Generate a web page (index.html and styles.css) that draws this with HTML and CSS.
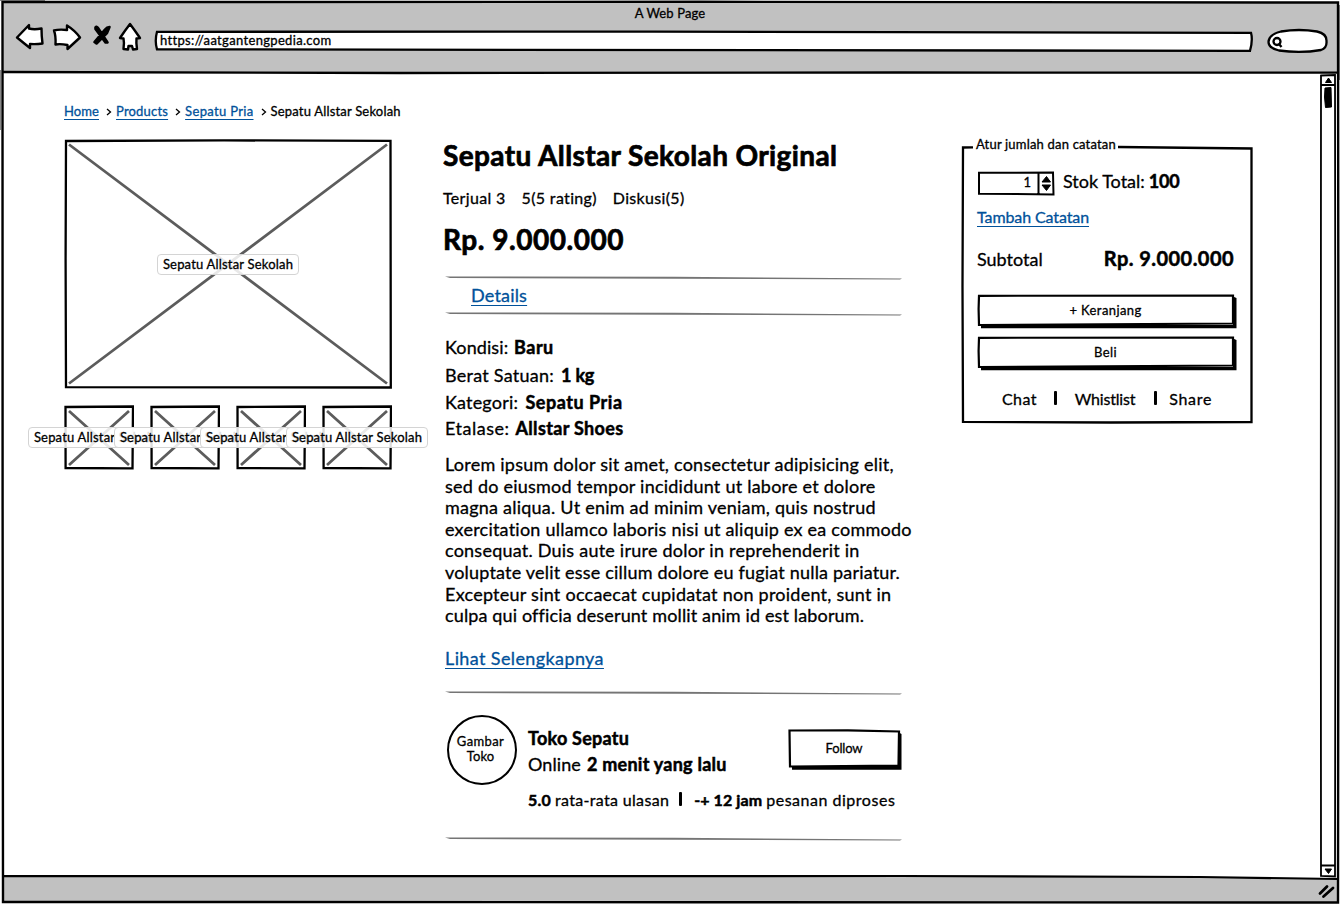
FILE: index.html
```html
<!DOCTYPE html>
<html lang="id">
<head>
<meta charset="utf-8">
<title>A Web Page</title>
<link rel="stylesheet" href="styles.css">
</head>
<body>
<div class="window">
  <svg class="frame" viewBox="0 0 1340 904" aria-hidden="true">
    <rect width="1340" height="904" fill="#fff"/>
    <path d="M3 2.5H1337V72.5H3z" fill="#c1c1c1"/>
    <path d="M3 876H1100L1338 878.5V902H3z" fill="#c1c1c1"/>
    <path d="M0 .5H45M.5 70V130M1339.500 5V80" stroke="#888" stroke-width="1" fill="none"/>
    <path d="M2.500 2L700 1.800 1338 2.500 1338.500 450 1338 902.500 700 902.200 3 902 2.600 500z" fill="none" stroke="#000" stroke-width="2.400"/>
    <path d="M3 72L400 73 900 72.500 1338 72.600" fill="none" stroke="#000" stroke-width="2.300"/>
    <path d="M3 876.200L900 876 1200 877 1338 879" fill="none" stroke="#000" stroke-width="2.200"/>
    <path d="M1321 75.500L1335 75 1335.500 500 1335 876.500 1321 876 1320.800 500z" fill="#fff" stroke="#000" stroke-width="1.800"/>
    <path d="M1321 85H1335M1321 865.500H1335" stroke="#000" stroke-width="1.800"/>
    <path d="M1328.500 78L1331.500 82.500H1325.500z" stroke="#000"/>
    <path d="M1325 869H1331.500L1328.500 873.500z" stroke="#000"/>
    <path d="M1325 88L1331 87.500 1331.500 107 1325.500 107.500 1324.500 97z" stroke="#000"/>
    <path d="M1320 893.500L1327 886.500M1323.500 896.500L1333 888" stroke="#000" stroke-width="2.800" stroke-linecap="round"/>
  </svg>

  <header class="chrome">
    <div class="chrome-title">A Web Page</div>
    <div class="toolbar">
      <svg class="nav-icons" width="130" height="32" viewBox="0 0 130 32" fill="#fff" stroke="#000" stroke-width="2.400" stroke-linejoin="round">
        <path d="M2 16.500L14 4V7.500Q19 9 26.500 7.500 26.500 15 27.500 22.500 21 23.500 15 23V27Q8 21.500 2 16.500z"/>
        <path d="M39 9.500Q44 8 52 9L52 4.500Q60 9.500 65 16.500L52.500 28V24Q45 22.500 40.500 23.500 41 15 39 9.500z"/>
        <path d="M80.500 6.500Q81 5 83 7L92.500 21.500 90.500 21.500 80.500 8zM94.500 6Q92 6 90 8.500L79.500 21 81.500 22.500 92 12z" fill="#000" stroke-width="2.600"/>
        <path d="M115 3Q119.500 9 125 17L121.500 17.500Q121 22 122 28L118 28.500 117 25H113.500L113 28.500 108.500 28Q109.500 22 108.500 17.500L105 17Q110 9.500 115 3z"/>
      </svg>
      <div class="address">
        <svg class="fill" viewBox="0 0 1100 22"><path d="M3 1.800L500 1.600 1097 2.800Q1099 10 1096 20.800L3 19.300Q.5 11 3 1.800z" fill="#fff" stroke="#000" stroke-width="2.300"/></svg>
        <span class="t13 ls33">https://aatgantengpedia.com</span>
      </div>
      <svg class="search" width="62" height="26" viewBox="0 0 62 26" fill="#fff" stroke="#000" stroke-width="2.300">
        <path d="M14 3.500Q32 .5 50 3.500Q60 5.500 59.500 13.500Q60 20 54 22Q34 25.500 12 22.500Q1.500 20 1.500 14Q2 6.500 14 3.500z"/>
        <circle cx="10" cy="13.500" r="3.500"/><path d="M11.500 15.500L14.500 19"/>
      </svg>
    </div>
  </header>

  <nav class="breadcrumb t13">
    <a class="ls09">Home</a><svg class="chev" viewBox="0 0 6 10"><path d="M1 2L4.500 5 1 8"/></svg>
    <a class="ls18">Products</a><svg class="chev" viewBox="0 0 6 10"><path d="M1 2L4.500 5 1 8"/></svg>
    <a class="ls33">Sepatu Pria</a><svg class="chev" viewBox="0 0 6 10"><path d="M1 2L4.500 5 1 8"/></svg>
    <span class="ls18">Sepatu Allstar Sekolah</span>
  </nav>

  <main class="product">
    <section class="gallery">
      <div class="photo photo-main">
        <svg class="fill" viewBox="0 0 328 250"><path d="M2 2L160 1.400 326.500 1.800 326.800 248.500 2 248.200 1.600 120z" fill="#fff" stroke="#000" stroke-width="2.300"/><path d="M5 5.500L323 244.500M323 5.500L5 244.500" stroke="#5c5c5c" stroke-width="2.800"/></svg>
        <span class="photo-label t13 ls18">Sepatu Allstar Sekolah</span>
      </div>
      <div class="thumbs">
        <div class="photo thumb"><svg class="fill" viewBox="0 0 70 65"><path d="M1.500 2L69 1.500 68.500 63.300 1.600 63z" fill="#fff" stroke="#000" stroke-width="2.300"/><path d="M5 6L65 60M65 6L5 60" stroke="#5c5c5c" stroke-width="2.800"/></svg><span class="photo-label t13 ls18">Sepatu Allstar Sekolah</span></div>
        <div class="photo thumb"><svg class="fill" viewBox="0 0 70 65"><path d="M1.500 2L69 1.500 68.500 63.300 1.600 63z" fill="#fff" stroke="#000" stroke-width="2.300"/><path d="M5 6L65 60M65 6L5 60" stroke="#5c5c5c" stroke-width="2.800"/></svg><span class="photo-label t13 ls18">Sepatu Allstar Sekolah</span></div>
        <div class="photo thumb"><svg class="fill" viewBox="0 0 70 65"><path d="M1.500 2L69 1.500 68.500 63.300 1.600 63z" fill="#fff" stroke="#000" stroke-width="2.300"/><path d="M5 6L65 60M65 6L5 60" stroke="#5c5c5c" stroke-width="2.800"/></svg><span class="photo-label t13 ls18">Sepatu Allstar Sekolah</span></div>
        <div class="photo thumb"><svg class="fill" viewBox="0 0 70 65"><path d="M1.500 2L69 1.500 68.500 63.300 1.600 63z" fill="#fff" stroke="#000" stroke-width="2.300"/><path d="M5 6L65 60M65 6L5 60" stroke="#5c5c5c" stroke-width="2.800"/></svg><span class="photo-label t13 ls18">Sepatu Allstar Sekolah</span></div>
      </div>
    </section>

    <section class="info">
      <h1 class="title">Sepatu Allstar Sekolah Original</h1>
      <div class="stats t16"><span>Terjual 3</span><span>5(5 rating)</span><span>Diskusi(5)</span></div>
      <div class="price">Rp. 9.000.000</div>
      <svg class="rule" viewBox="0 0 457 4"><path d="M0 .5L230 .8 457 2.500 455 3.500 230 2.800 5 2z"/></svg>
      <div class="tab t18"><a class="ls18">Details</a></div>
      <svg class="rule" viewBox="0 0 457 4"><path d="M0 .5L230 .8 457 2.500 455 3.500 230 2.800 5 2z"/></svg>
      <dl class="specs t18">
        <div class="spec spec-1"><dt class="ls09">Kondisi:</dt><dd class="ls50">Baru</dd></div>
        <div class="spec spec-2"><dt class="ls25">Berat Satuan:</dt><dd class="lsn">1 kg</dd></div>
        <div class="spec spec-3"><dt class="ls18">Kategori:</dt><dd class="ls50">Sepatu Pria</dd></div>
        <div class="spec spec-4"><dt class="ls50">Etalase:</dt><dd class="ls33">Allstar Shoes</dd></div>
      </dl>
      <p class="desc">Lorem ipsum dolor sit amet, consectetur adipisicing elit,<br>sed do eiusmod tempor incididunt ut labore et dolore<br>magna aliqua. Ut enim ad minim veniam, quis nostrud<br>exercitation ullamco laboris nisi ut aliquip ex ea commodo<br>consequat. Duis aute irure dolor in reprehenderit in<br><span class="ls18">voluptate velit esse cillum dolore eu fugiat nulla pariatur.</span><br><span class="ls25">Excepteur sint occaecat cupidatat non proident, sunt in</span><br><span class="ls14">culpa qui officia deserunt mollit anim id est laborum.</span></p>
      <div class="more t18"><a class="ls38">Lihat Selengkapnya</a></div>
      <svg class="rule rule-shop" viewBox="0 0 457 4"><path d="M0 .5L230 .8 457 2.500 455 3.500 230 2.800 5 2z"/></svg>
      <div class="shop">
        <div class="avatar t13"><span class="ls38">Gambar</span><span class="ls09">Toko</span></div>
        <div class="shop-info">
          <div class="shop-top">
            <div class="shop-name t18">
              <b class="ls25">Toko Sepatu</b>
              <div class="online"><span class="ls09">Online</span><b class="ls25">2 menit yang lalu</b></div>
            </div>
            <button class="btn follow t13"><svg class="fill" viewBox="0 0 114 41"><path d="M4 37H110V3L113.500 5V40.800H4z"/><path d="M1.500 1.500L60 1.300 111 2.500 110.500 36.500 2 37.500z" fill="#fff" stroke="#000" stroke-width="2.200"/></svg><span class="lsf">Follow</span></button>
          </div>
          <div class="rating t16"><b class="ls18">5.0</b><span class="ls33">rata-rata ulasan</span><i class="bar"></i><b class="ls09">-+ 12 jam</b><span class="ls50">pesanan diproses</span></div>
        </div>
      </div>
      <svg class="rule" viewBox="0 0 457 4"><path d="M0 .5L230 .8 457 2.500 455 3.500 230 2.800 5 2z"/></svg>
    </section>

    <aside class="order">
      <svg class="fill" viewBox="0 0 292 287"><path d="M12 10.300L2 10.500 1.500 150 2 284.800 150 285.500 290.500 285 290.500 150 290.500 11.500 157 10" fill="none" stroke="#000" stroke-width="2.300"/></svg>
      <h2 class="legend t13 ls18">Atur jumlah dan catatan</h2>
      <div class="stock t18">
        <div class="stepper">
          <svg class="fill" viewBox="0 0 77 25"><path d="M1.500 1.800L75.500 1.500 76 23.500 1.500 22.700zM61 2V23" fill="#fff" stroke="#000" stroke-width="2"/><path d="M64.500 11L69 5.500 73 11zM64.500 14H73L69 19.500z" stroke="#000"/></svg>
          <span class="t13">1</span>
        </div>
        <span>Stok Total:</span><b class="lsn">100</b>
      </div>
      <div class="note t16"><a class="lsn1">Tambah Catatan</a></div>
      <div class="subtotal"><span class="t18">Subtotal</span><b class="amount">Rp. 9.000.000</b></div>
      <div class="actions">
        <button class="btn wide t13"><svg class="fill" viewBox="0 0 260 35"><path d="M4 31H256V2.500L259.500 4V34.300H4z"/><path d="M2 1.800L256 1.500 256 29.500 2 31 1.600 15z" fill="#fff" stroke="#000" stroke-width="2.200"/></svg><span class="ls38">+ Keranjang</span></button>
        <button class="btn wide t13"><svg class="fill" viewBox="0 0 260 35"><path d="M4 31H256V2.500L259.500 4V34.300H4z"/><path d="M2 1.800L256 1.500 256 29.500 2 31 1.600 15z" fill="#fff" stroke="#000" stroke-width="2.200"/></svg><span class="ls38">Beli</span></button>
      </div>
      <div class="links t16"><span class="ls38">Chat</span><i class="bar"></i><span class="lsn">Whistlist</span><i class="bar"></i><span class="ls70">Share</span></div>
    </aside>
  </main>
</div>
</body>
</html>
```
FILE: styles.css
```css
* { box-sizing: border-box; margin: 0; padding: 0; }

body {
  width: 1340px;
  height: 904px;
  overflow: hidden;
  background: #fff;
  color: #000;
  font-family: Lato, "Open Sans", sans-serif;
  font-variant-ligatures: none;
  -webkit-text-stroke: 0.3px currentColor;
}

a {
  color: #00519a;
  text-decoration: underline;
  text-decoration-thickness: 1px;
  text-underline-offset: 2.5px;
  text-decoration-skip-ink: none;
}

b, dd { font-weight: 700; -webkit-text-stroke-width: 0.5px; }

.t13 { font-size: 13px; line-height: 16px; }
.t16 { font-size: 16px; line-height: 19px; }
.t18 { font-size: 18px; line-height: 22px; }

.lsn { letter-spacing: -0.2px; }
.lsn1 { letter-spacing: -0.1px; }
.lsf { letter-spacing: -0.15px; }
.ls09 { letter-spacing: 0.09px; }
.ls14 { letter-spacing: 0.14px; }
.ls18 { letter-spacing: 0.19px; }
.ls25 { letter-spacing: 0.25px; }
.ls33 { letter-spacing: 0.33px; }
.ls38 { letter-spacing: 0.39px; }
.ls50 { letter-spacing: 0.52px; }
.ls70 { letter-spacing: 0.7px; }

.window { position: relative; width: 1340px; height: 904px; }
.frame { position: absolute; inset: 0; width: 100%; height: 100%; }
.fill { position: absolute; inset: 0; width: 100%; height: 100%; }

/* Browser chrome */
.chrome { position: relative; height: 73px; padding-top: 5px; }
.chrome-title { font-size: 13px; line-height: 16px; text-align: center; letter-spacing: 0.11px; }
.toolbar { display: flex; align-items: flex-start; padding-left: 15px; }
.nav-icons { display: block; flex: none; }
.address { position: relative; width: 1100px; height: 22px; margin: 9px 0 0 8px; padding: 2px 0 0 7px; }
.address .fill { left: 1px; }
.address span { position: relative; display: block; }
.search { display: block; margin: 7px 0 0 14px; }

.breadcrumb { position: relative; display: flex; align-items: center; padding: 30px 0 0 64px; }
.chev { width: 6px; height: 10px; margin: 1px 4px 0 7px; fill: none; stroke: #000; stroke-width: 1.3; }

/* Columns */
.product {
  position: relative;
  display: grid;
  grid-template-columns: 328px 470px 292px;
  column-gap: 49px;
  padding: 18px 0 0 64px;
  align-items: start;
}

/* Gallery */
.gallery { padding-top: 2px; }
.photo { position: relative; display: flex; align-items: center; justify-content: center; }
.photo-main { width: 328px; height: 250px; }
.thumbs { display: flex; gap: 16px; margin-top: 16px; }
.thumb { width: 70px; height: 65px; }
.photo-label {
  position: relative;
  flex: none;
  width: 142px;
  height: 21px;
  border: 1px solid #d4d4d4;
  border-radius: 4px;
  background: rgba(255, 255, 255, 0.86);
  line-height: 18px;
  text-align: center;
  white-space: nowrap;
}

/* Product information */
.info { padding-left: 2px; }
.title { padding-top: 1px; font-size: 28px; line-height: 34px; font-weight: 700; letter-spacing: 0.39px; white-space: nowrap; -webkit-text-stroke-width: 0.7px; }
.stats { display: flex; gap: 16px; margin-top: 16px; letter-spacing: 0.33px; }
.price { margin-top: 15px; font-size: 28px; line-height: 34px; font-weight: 700; letter-spacing: 0.52px; -webkit-text-stroke-width: 0.7px; }
.rule { display: block; width: 457px; height: 4px; margin: 20px 0 0 2px; fill: #757575; }
.tab { margin-top: 4px; padding-left: 28px; }
.tab + .rule { margin-top: 6px; }
.specs { margin: 20px 0 0 2px; }
.spec { display: grid; height: 22px; white-space: nowrap; }
.spec-1 { grid-template-columns: 69px auto; justify-content: start; }
.spec-2 { grid-template-columns: 116px auto; justify-content: start; margin-top: 6px; }
.spec-3 { grid-template-columns: 80.5px auto; justify-content: start; margin-top: 5px; }
.spec-4 { grid-template-columns: 70.5px auto; justify-content: start; margin-top: 4px; }
.desc { height: 172px; margin: 15px 0 0 2px; font-size: 18px; line-height: 21.6px; letter-spacing: 0.23px; white-space: nowrap; }
.more { margin: 21px 0 0 2px; }

/* Shop */
.rule-shop { margin-top: 22px; }
.shop { display: flex; height: 142px; padding: 20px 0 0 4px; }
.shop + .rule { margin-top: 0; }
.avatar {
  display: flex;
  flex-direction: column;
  align-items: center;
  justify-content: center;
  flex: none;
  width: 70px;
  height: 70px;
  padding: 0 3px 2px 0;
  border: 2px solid #000;
  border-radius: 50%;
  line-height: 15px;
}
.shop-info { width: 374px; margin-left: 11px; padding-top: 12px; }
.shop-top { display: flex; justify-content: space-between; }
.shop-name > b { display: block; }
.online { display: flex; gap: 6px; margin-top: 4px; white-space: nowrap; }
.rating { display: flex; margin-top: 15px; white-space: nowrap; }
.bar { display: block; width: 3px; height: 14px; border-radius: 1px; background: #000; }
.rating span { margin-left: 4px; }
.rating .bar { margin: 2px 12px 0 10px; }

/* Buttons */
.btn {
  position: relative;
  display: flex;
  align-items: center;
  justify-content: center;
  border: 0;
  background: none;
  color: #000;
  font-family: inherit;
  -webkit-text-stroke: inherit;
}
.btn span { position: relative; }
.follow { width: 114px; height: 41px; margin-top: 2px; padding: 0 2px 3px 0; }
.wide { width: 260px; height: 35px; padding: 0 3px 3px 0; }

/* Order panel */
.order { position: relative; width: 292px; height: 287px; margin-left: 1px; padding-left: 16px; }
.legend { position: relative; margin-left: -1px; line-height: 15px; padding-bottom: 1px; font-weight: 400; }
.stock { position: relative; display: flex; align-items: flex-start; margin-top: 17px; }
.stepper { position: relative; width: 78px; height: 25px; margin: 1px 8px 0 0; padding: 3px 24px 0 0; text-align: right; }
.stepper .t13 { position: relative; display: block; }
.stock b { margin-left: 4px; }
.note { position: relative; margin-top: 11px; }
.subtotal { position: relative; display: flex; justify-content: space-between; align-items: baseline; width: 257px; margin-top: 20px; }
.amount { font-size: 20px; line-height: 24px; letter-spacing: 0.45px; }
.actions { display: grid; gap: 7px; margin-top: 24px; }
.links { position: relative; display: flex; margin: 18px 0 0 25px; }
.links .bar { margin-top: 2px; }
.links .bar:nth-of-type(1) { margin-left: 17px; margin-right: 18px; }
.links .bar:nth-of-type(2) { margin-left: 19px; margin-right: 12px; }
```
